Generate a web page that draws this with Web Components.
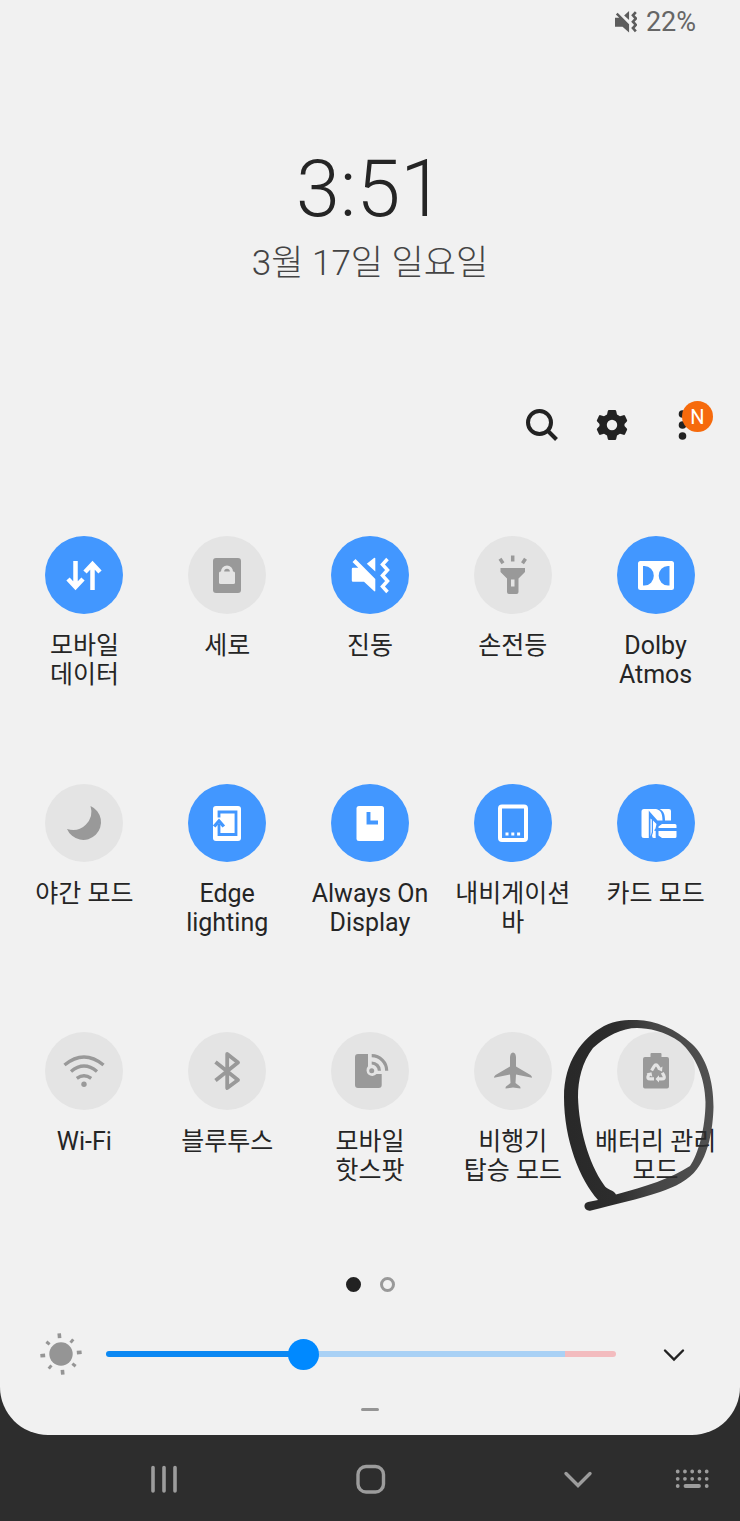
<!DOCTYPE html>
<html lang="ko">
<head>
<meta charset="utf-8">
<meta name="viewport" content="width=device-width, initial-scale=1">
<title>빠른 설정</title>
<style>
  body { margin: 0; background: #2d2d2d; font-family: Roboto, "Noto Sans CJK KR", sans-serif; color: #252525; }
</style>
</head>
<body>
<quick-panel></quick-panel>

<template id="t-panel">
  <style>
    :host { display: flex; flex-direction: column; min-height: 100vh; }
    main { display: flex; flex-direction: column; flex: 1; background: #f1f1f1; border-radius: 0 0 48px 48px; }
    .tiles { display: grid; grid-template-columns: repeat(5, 1fr); row-gap: 95px; padding: 0 13px; margin-top: 91px; }
  </style>
  <main>
    <status-bar></status-bar>
    <clock-face></clock-face>
    <panel-tools></panel-tools>
    <section class="tiles">
      <quick-tile on>
        <svg slot="icon" viewBox="0 0 78 78" fill="none" stroke="currentColor" stroke-width="4.5"><path d="M30.5 25V51M23 43l7.500 8 7.500-8M47.500 54V28M40 36l7.500-8 7.500 8"/></svg>
        모바일<br>데이터
      </quick-tile>
      <quick-tile>
        <svg slot="icon" viewBox="0 0 78 78"><rect x="25" y="22" width="28" height="35" rx="3" fill="currentColor"/><rect x="31" y="35.500" width="16" height="12.500" rx="1.500" fill="#e4e4e4"/><path d="M34.600 37v-1.500a4.400 4.400 0 0 1 8.800 0V37" fill="none" stroke="#e4e4e4" stroke-width="3.200"/></svg>
        세로
      </quick-tile>
      <quick-tile on>
        <svg slot="icon" viewBox="0 0 78 78"><path fill="currentColor" d="M21.500 26l3-3L44.300 43V54.500q0 1.500-1.300.5L33 45.700H22q-1.200 0-1.200-1.200V33q0-1.200 1.200-1.200H27.300ZM44.300 22.500V35.500L35.800 27.800 43 21.900q1.300-.6 1.300.6Z"/><path d="M56.500 23l-5 5.500 5 5.500-5 5.500 5 5.500-5 5.500 5 5.500" fill="none" stroke="currentColor" stroke-width="3.500"/></svg>
        진동
      </quick-tile>
      <quick-tile>
        <svg slot="icon" viewBox="0 0 78 78"><path fill="currentColor" fill-rule="evenodd" d="M26.500 32h24.500v4l-6.500 6.500V56q0 2-2 2h-7.500q-2 0-2-2V42.500l-6.500-6.500ZM37 43.500v7h3.500v-7Z"/><path d="M38.700 19.500v6M26 22.800l3 4.500M51.500 22.800l-3 4.500" stroke="currentColor" stroke-width="3.500"/></svg>
        손전등
      </quick-tile>
      <quick-tile on>
        <svg slot="icon" viewBox="0 0 78 78"><path fill="currentColor" fill-rule="evenodd" d="M23.500 25h31q2.500 0 2.500 2.500v24q0 2.500-2.500 2.500h-31q-2.500 0-2.500-2.500v-24q0-2.500 2.500-2.500ZM26 30v19.500h1.500a9.300 9.750 0 0 0 0-19.500ZM52.500 30h-1.500a9.300 9.750 0 0 0 0 19.500h1.500Z"/></svg>
        Dolby<br>Atmos
      </quick-tile>

      <quick-tile>
        <svg slot="icon" viewBox="0 0 78 78"><path fill="currentColor" d="M45.500 22A17.700 17.700 0 1 1 22 45A18.500 18.500 0 0 0 45.500 22Z"/></svg>
        야간 모드
      </quick-tile>
      <quick-tile on>
        <svg slot="icon" viewBox="0 0 78 78"><rect x="25" y="22" width="28" height="35" rx="3" fill="currentColor"/><path d="M31 33.500V28H48V50.500H31V40" fill="none" stroke="#4297ff" stroke-width="2.800"/><path d="M26.200 42.500L31 37l4.800 5.500" fill="none" stroke="#4297ff" stroke-width="3.400"/></svg>
        Edge<br>lighting
      </quick-tile>
      <quick-tile on>
        <svg slot="icon" viewBox="0 0 78 78"><rect x="25.500" y="22" width="27.500" height="35" rx="2.500" fill="currentColor"/><path d="M37.500 28V38.500H47" fill="none" stroke="#4297ff" stroke-width="3.900"/></svg>
        Always On<br>Display
      </quick-tile>
      <quick-tile on>
        <svg slot="icon" viewBox="0 0 78 78"><rect x="26" y="22.500" width="26" height="33.500" rx="2" fill="none" stroke="currentColor" stroke-width="4"/><path d="M31.500 50h15" stroke="currentColor" stroke-width="3" stroke-dasharray="3 2.800"/></svg>
        내비게이션<br>바
      </quick-tile>
      <quick-tile on>
        <svg slot="icon" viewBox="0 0 78 78" fill="currentColor"><path d="M27 25h4.800V54H27q-2.500 0-2.500-2.500V27.500q0-2.500 2.500-2.500ZM31 25h8c4.500 1 6.500 4 6.500 11.500h-5L32.500 27.500ZM42.500 25H52q2 0 2 2V36.500h-6C48 30 46.500 27 42.500 25ZM33.500 34.500l1.300 1V48l-1.300 4.500ZM36 36.500l3.500 3.500-1 4.500-1.500 2 1.700.5V54h-2q-1.700 0-1.700-2.500l1-3ZM41.500 42.500l3.500-2.500H58q1.500 0 1.500 1.500V44H41.500ZM41.500 47H59.500V52.500q0 1.500-1.500 1.500H45l-3.500-2.500Z"/></svg>
        카드 모드
      </quick-tile>

      <quick-tile>
        <svg slot="icon" viewBox="0 0 78 78"><path d="M19.500 33Q39 17 58.500 33M26 39.500Q39 28.500 52 39.500M31.800 46.300Q39 41 46.200 46.300" fill="none" stroke="currentColor" stroke-width="3.400"/><circle cx="39" cy="52.300" r="2.700" fill="currentColor"/></svg>
        Wi-Fi
      </quick-tile>
      <quick-tile>
        <svg slot="icon" viewBox="0 0 78 78"><path d="M27.500 30L50 48 39.200 56V22L50 30.500 27.500 48.500" fill="none" stroke="currentColor" stroke-width="3.800" stroke-linejoin="round"/></svg>
        블루투스
      </quick-tile>
      <quick-tile>
        <svg slot="icon" viewBox="0 0 78 78"><path fill="currentColor" d="M27 22H37V34.300A5.600 5.600 0 1 0 45.500 42H50.700V53q0 3-3 3H27q-3 0-3-3V25q0-3 3-3Z"/><circle cx="40.700" cy="38.700" r="2.500" fill="currentColor"/><path d="M40.700 31a7.700 7.700 0 0 1 7.700 7.700M40.700 23.700a15 15 0 0 1 15 15" fill="none" stroke="currentColor" stroke-width="3.200"/></svg>
        모바일<br>핫스팟
      </quick-tile>
      <quick-tile>
        <svg slot="icon" viewBox="0 0 78 78"><path fill="currentColor" d="M39 20.500c2 0 3 2.500 3 5v9L56.500 43q1.500 1 1.500 2.800L42 42.500 41.500 51l4.500 3.500q.5.500.5 2L39 55.500 31.500 56.500q0-1.500.5-2L36.500 51 36 42.500 20 45.800q0-1.800 1.500-2.800L36 34.500v-9c0-2.500 1-5 3-5Z"/></svg>
        비행기<br>탑승 모드
      </quick-tile>
      <quick-tile>
        <svg slot="icon" viewBox="0 0 78 78"><path fill="currentColor" d="M33.500 25V22q0-1 1-1h9q1 0 1 1v3h5.500q2 0 2 2V54.500q0 2-2 2H28q-2 0-2-2V27q0-2 2-2Z"/><g fill="none" stroke="#e4e4e4" stroke-width="3.200"><path d="M34.600 38.500L37 34.500q2-3.200 4 0l1.400 2.300"/><path d="M45.300 40.800l1.600 2.800q1.500 3.300-2 3.300H41.500"/><path d="M37 46.900H33.300q-3.600 0-2-3.300l1.200-2"/></g><path fill="#e4e4e4" d="M45.500 34.500l-.5 5-4.500-2ZM42 43.200v7.400l-3.500-3.700ZM29.500 41.500l5-1.300.8 4.500Z"/></svg>
        배터리 관리<br>모드
        <ink-mark slot="mark"></ink-mark>
      </quick-tile>
    </section>
    <page-dots></page-dots>
    <brightness-row></brightness-row>
    <drag-handle></drag-handle>
  </main>
  <nav-bar></nav-bar>
</template>

<template id="t-status">
  <style>
    :host { display: flex; justify-content: flex-end; align-items: center; gap: 9px; height: 44px; padding-right: 44px; font-size: 27px; line-height: 32px; color: #666; }
    svg { width: 22px; height: 22px; color: #5c5c5c; }
  </style>
  <svg viewBox="20 20 38 38" role="img" aria-label="진동"><path fill="currentColor" d="M21.500 26l3-3L44.300 43V57L33 47H20V31.800H27.300ZM44.300 20V35.500L35.800 27.800Z"/><path d="M56 22l-5 5.500 5 5.500-5 5.500 5 5.500-5 5.500 5 5.500" fill="none" stroke="currentColor" stroke-width="4.500"/></svg>
  <span>22%</span>
</template>

<template id="t-clock">
  <style>
    :host { display: flex; flex-direction: column; align-items: center; gap: 3px; padding-top: 97px; font-weight: 300; }
    .time { font-size: 79px; line-height: 96px; }
    .date { font-size: 35px; line-height: 48px; color: #444; }
  </style>
  <time class="time">3:51</time>
  <time class="date">3월 17일 일요일</time>
</template>

<template id="t-tools">
  <style>
    :host { display: flex; justify-content: flex-end; gap: 30px; padding: 117px 38px 0 0; }
    button { position: relative; width: 40px; height: 40px; padding: 0; border: 0; background: none; color: #222; font: inherit; }
    svg { display: block; width: 40px; height: 40px; }
    .badge { position: absolute; left: 20px; top: -4px; width: 31px; height: 31px; border-radius: 50%; background: #f66a0c; color: #fff; font-size: 20px; line-height: 32px; text-align: center; }
  </style>
  <button type="button" aria-label="검색"><svg viewBox="0 0 40 40" fill="none" stroke="currentColor" stroke-width="4"><circle cx="17.500" cy="17.500" r="11.500"/><path d="M25.500 25.500l9 9"/></svg></button>
  <button type="button" aria-label="설정"><svg viewBox="0 0 40 40"><path fill="currentColor" fill-rule="evenodd" d="M17 5h6q1 0 1.200 1l.8 3.600 3 1.700 3.500-1.100q1-.3 1.500.5l2 4.300q.5.900-.2 1.600L32.500 19v2l2.300 2.400q.7.700.2 1.600L33 29.300q-.5.800-1.500.5L28 28.700l-3 1.700-.8 3.600q-.2 1-1.200 1h-6q-1 0-1.200-1L15 30.400l-3-1.700-3.500 1.100q-1 .3-1.500-.5L5 25q-.5-.9.200-1.600L7.500 21v-2L5.200 16.600q-.7-.7-.2-1.600L7 10.700q.5-.8 1.500-.5L12 11.300l3-1.700L15.800 6q.2-1 1.200-1ZM20 14.800a5.200 5.200 0 1 0 0 10.400a5.200 5.200 0 1 0 0-10.400Z"/></svg></button>
  <button type="button" aria-label="더보기"><svg viewBox="0 0 40 40" fill="currentColor"><circle cx="20.500" cy="9" r="3.800"/><circle cx="20.500" cy="20" r="3.800"/><circle cx="20.500" cy="31" r="3.800"/></svg><span class="badge">N</span></button>
</template>

<template id="t-tile">
  <style>
    :host { display: flex; justify-content: center; position: relative; min-width: 0; }
    button { display: flex; flex-direction: column; align-items: center; gap: 17px; width: 100%; padding: 0; border: 0; background: none; font: inherit; font-size: 25px; line-height: 29px; color: #252525; text-align: center; white-space: nowrap; }
    .disc { width: 78px; height: 78px; border-radius: 50%; background: #e4e4e4; color: #999; }
    :host([on]) .disc { background: #4297ff; color: #fff; }
    ::slotted(svg) { display: block; width: 78px; height: 78px; }
  </style>
  <button type="button"><span class="disc"><slot name="icon"></slot></span><span><slot></slot></span></button>
  <slot name="mark"></slot>
</template>

<template id="t-ink">
  <style>
    :host { position: absolute; top: -17px; left: calc(50% - 96px); width: 160px; height: 200px; pointer-events: none; }
    svg { display: block; width: 160px; height: 200px; }
  </style>
  <svg viewBox="560 1015 160 200" aria-hidden="true">
    <defs><linearGradient id="g" x1="0" y1="0" x2="1" y2="0"><stop offset="0" stop-color="#222"/><stop offset=".35" stop-color="#262626"/><stop offset=".6" stop-color="#2c2c2c" stop-opacity=".9"/><stop offset="1" stop-color="#2c2c2c" stop-opacity=".84"/></linearGradient></defs>
    <path fill="url(#g)" fill-opacity=".97" fill-rule="evenodd" d="M591 1210.500C584 1212 582 1203 588 1202L598 1200C580 1180 564 1140 564 1097C564 1062 582 1038 604 1026C616 1020 626 1020 637 1020C655 1020 676 1029 692 1044C706 1057 713.500 1080 713.500 1107C713 1130 708 1155 697 1169C689 1180 675 1187 660 1192C640 1199 612 1205 591 1210.500ZM616 1194.500C645 1187 672 1178 690 1166C698 1155 705.500 1128 705.500 1102C705 1078 696 1056 680 1042C665 1031 648 1028 637 1028C622 1028 606 1036 593 1048C582 1062 578 1080 578 1097C579 1128 588 1162 604 1185C607 1190 614 1190 616 1194.500Z"/>
  </svg>
</template>

<template id="t-dots">
  <style>
    :host { display: flex; justify-content: center; gap: 19px; margin-top: 92px; }
    i { box-sizing: border-box; width: 15px; height: 15px; border-radius: 50%; border: 3px solid #999; }
    .now { background: #222; border-color: #222; }
  </style>
  <i class="now"></i><i></i>
</template>

<template id="t-bright">
  <style>
    :host { display: flex; align-items: center; padding: 0 46px 0 40px; margin-top: 41px; }
    svg { display: block; flex: none; }
    .sun { width: 42px; height: 42px; margin-right: 24px; color: #959595; }
    input { -webkit-appearance: none; appearance: none; flex: 1; min-width: 0; height: 32px; margin: 0 38px 0 0; background: none; }
    input::-webkit-slider-runnable-track { height: 6px; border-radius: 3px; background: linear-gradient(to right, #0b88f3 39%, #a9d1f5 39% 90%, #f3bcbf 90%); }
    input::-webkit-slider-thumb { -webkit-appearance: none; width: 31px; height: 31px; margin-top: -12px; border-radius: 50%; background: #0089ff; }
    button { padding: 0; border: 0; background: none; color: #222; }
    button svg { width: 40px; height: 40px; }
  </style>
  <svg class="sun" viewBox="0 0 42 42" aria-hidden="true"><circle cx="21" cy="21" r="11.700" fill="currentColor"/><g transform="rotate(-5 21 21)" stroke="currentColor"><path stroke-width="3.600" d="M21 .3v4.800M21 36.900v4.800M.3 21h4.800M36.900 21h4.800"/><path stroke-width="3" d="M7.500 7.500l3 3M34.500 7.500l-3 3M7.500 34.500l3-3M34.500 34.500l-3-3"/></g></svg>
  <input type="range" min="0" max="100" value="38" aria-label="밝기">
  <button type="button" aria-label="펼치기"><svg viewBox="0 0 40 40" fill="none" stroke="currentColor" stroke-width="2.400" stroke-linecap="round"><path d="M11 16.500l9 9 9-9"/></svg></button>
</template>

<template id="t-handle">
  <style>
    :host { display: flex; justify-content: center; margin-top: 33px; padding-bottom: 24px; }
    i { width: 18px; height: 3px; border-radius: 2px; background: #959595; }
  </style>
  <i></i>
</template>

<template id="t-nav">
  <style>
    :host { display: flex; align-items: center; gap: 58px; padding: 15px 20px 15px 136px; color: #9c9c9c; }
    .keys { display: flex; flex: 1; justify-content: space-between; }
    button { padding: 0; border: 0; background: none; color: inherit; }
    svg { display: block; width: 56px; height: 56px; }
  </style>
  <div class="keys">
    <button type="button" aria-label="최근 앱"><svg viewBox="0 0 56 56" stroke="currentColor" stroke-width="3.600" stroke-linecap="round"><path d="M17 17.500v23.500M28 17.500v23.500M39 17.500v23.500"/></svg></button>
    <button type="button" aria-label="홈"><svg viewBox="0 0 56 56" fill="none" stroke="currentColor" stroke-width="3.400"><rect x="15" y="16.500" width="25.500" height="25.500" rx="8"/></svg></button>
    <button type="button" aria-label="뒤로"><svg viewBox="0 0 56 56" fill="none" stroke="currentColor" stroke-width="3.400" stroke-linecap="round"><path d="M16 23.500l12 12 12-12"/></svg></button>
  </div>
  <button type="button" aria-label="키보드"><svg viewBox="0 0 56 56" stroke="currentColor" stroke-width="3.800" stroke-linecap="round"><path stroke-dasharray="0 7.250" d="M13.700 21.500h29.200M13.700 28.800h29.200"/><path d="M13.700 36h.01M21.500 36h13.500M42.700 36h.01"/></svg></button>
</template>

<script>
  const define = (name, templateId, ready) => customElements.define(name, class extends HTMLElement {
    constructor() {
      super();
      this.attachShadow({ mode: "open" }).append(document.getElementById(templateId).content.cloneNode(true));
    }
    connectedCallback() { if (ready) ready(this); }
  });
  define("status-bar", "t-status");
  define("clock-face", "t-clock");
  define("panel-tools", "t-tools");
  define("ink-mark", "t-ink");
  define("quick-tile", "t-tile", (tile) => {
    const button = tile.shadowRoot.querySelector("button");
    const sync = () => button.setAttribute("aria-pressed", tile.hasAttribute("on"));
    button.onclick = () => { tile.toggleAttribute("on"); sync(); };
    sync();
  });
  define("page-dots", "t-dots");
  define("brightness-row", "t-bright");
  define("drag-handle", "t-handle");
  define("nav-bar", "t-nav");
  define("quick-panel", "t-panel");
</script>
</body>
</html>
